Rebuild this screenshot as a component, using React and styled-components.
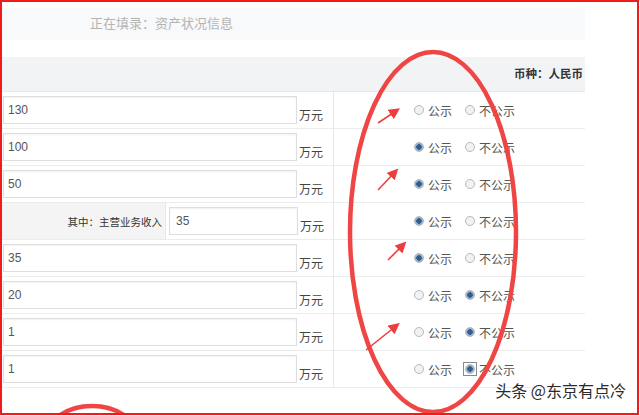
import styled, { createGlobalStyle } from "styled-components";

const GlobalStyle = createGlobalStyle`
  * { box-sizing: border-box; }
  body {
    margin: 0;
    background: #fff;
    font-family: "Liberation Sans", "Noto Sans CJK SC", sans-serif;
  }
`;

const rows = [
  { value: "130", pick: null },
  { value: "100", pick: "yes" },
  { value: "50", pick: "yes" },
  { value: "35", pick: "yes", label: "其中：主营业务收入" },
  { value: "35", pick: "yes" },
  { value: "20", pick: "no" },
  { value: "1", pick: "no" },
  { value: "1", pick: "no", focus: true },
];

function Radio({ checked, focus, text }) {
  return (
    <RadioItem>
      <FocusBox focus={focus}>
        <Dot checked={checked} />
      </FocusBox>
      <span>{text}</span>
    </RadioItem>
  );
}

function Marks() {
  return (
    <Overlay viewBox="0 0 640 415" width="640" height="415">
      <defs>
        <marker id="head" markerWidth="7" markerHeight="7" refX="4" refY="3.5" orient="auto">
          <path d="M0,0 L7,3.5 L0,7 Z" fill="#ee3d3d" />
        </marker>
      </defs>
      <ellipse cx="433" cy="232" rx="83" ry="180" fill="none" stroke="#f04545" strokeWidth="4.5" />
      <ellipse cx="92" cy="442" rx="48" ry="36" fill="none" stroke="#f04545" strokeWidth="4.5" />
      <g stroke="#ee3d3d" strokeWidth="1.6" markerEnd="url(#head)">
        <line x1="378" y1="123" x2="396" y2="111" />
        <line x1="378" y1="190" x2="395" y2="172" />
        <line x1="388" y1="260" x2="403" y2="245" />
        <line x1="366" y1="350" x2="396" y2="326" />
      </g>
    </Overlay>
  );
}

export default function App() {
  return (
    <>
      <GlobalStyle />
      <Frame>
        <Panel>
          <Header>正在填录：资产状况信息</Header>
          <CurrencyBar>币种：人民币</CurrencyBar>
          {rows.map((row, i) => (
            <Row key={i}>
              <AmountCell>
                {row.label && <LabelCell>{row.label}</LabelCell>}
                <Input short={!!row.label}>{row.value}</Input>
                <Unit>万元</Unit>
              </AmountCell>
              <ChoiceCell>
                <Radio checked={row.pick === "yes"} text="公示" />
                <Radio checked={row.pick === "no"} focus={row.focus} text="不公示" />
              </ChoiceCell>
            </Row>
          ))}
        </Panel>
        <Marks />
        <Watermark>头条 @东京有点冷</Watermark>
      </Frame>
    </>
  );
}

const Frame = styled.div`
  position: relative;
  width: 639px;
  height: 415px;
  border: 2px solid #ee1c1c;
  overflow: hidden;
  background: #fff;
`;

const Panel = styled.div`
  width: 583px;
  padding-top: 6px;
`;

const Header = styled.div`
  height: 32px;
  background: #f8f9fa;
  padding-left: 88px;
  font-size: 13px;
  line-height: 32px;
  color: #b4b4b4;
  margin-bottom: 17px;
`;

const CurrencyBar = styled.div`
  height: 35px;
  background: #f2f3f4;
  border-bottom: 1px solid #e8e8e8;
  text-align: right;
  padding-right: 2px;
  font-size: 11.5px;
  font-weight: bold;
  line-height: 35px;
  color: #333;
`;

const Row = styled.div`
  display: flex;
  height: 37px;
  border-bottom: 1px solid #ececec;
`;

const AmountCell = styled.div`
  display: flex;
  align-items: center;
  width: 332px;
  padding-left: 1px;
  border-right: 1px solid #e8e8e8;
`;

const LabelCell = styled.div`
  align-self: stretch;
  width: 164px;
  margin-left: -1px;
  background: #f4f4f4;
  border-right: 1px solid #e8e8e8;
  display: flex;
  align-items: center;
  justify-content: flex-end;
  padding-right: 3px;
  font-size: 10.5px;
  color: #333;
  margin-right: 3px;
`;

const Input = styled.div`
  width: ${(p) => (p.short ? "129px" : "294px")};
  height: 28px;
  border: 1px solid #dedede;
  box-shadow: inset 0 1px 2px rgba(0, 0, 0, 0.06);
  background: #fff;
  padding-left: ${(p) => (p.short ? "6px" : "4px")};
  font-size: 12px;
  line-height: 26px;
  color: #555;
`;

const Unit = styled.span`
  margin-top: 9px;
  margin-left: 2px;
  font-size: 12px;
  color: #444;
`;

const ChoiceCell = styled.div`
  display: flex;
  align-items: center;
  gap: 12px;
  padding-left: 79px;
  flex: 1;
`;

const RadioItem = styled.label`
  display: flex;
  align-items: center;
  gap: 3px;
  font-size: 12px;
  color: #555;
`;

const FocusBox = styled.span`
  display: flex;
  padding: 1px;
  margin: -1px;
  border: 1px solid ${(p) => (p.focus ? "#8a8a8a" : "transparent")};
`;

const Dot = styled.span`
  width: 10px;
  height: 10px;
  border-radius: 50%;
  border: 1px solid #b8b8b8;
  background: ${(p) =>
    p.checked ? "radial-gradient(circle, #2f5f8e 0 2.5px, #9ab6cf 3px)" : "#f2f2f2"};
`;

const Overlay = styled.svg`
  position: absolute;
  left: -2px;
  top: -2px;
  pointer-events: none;
`;

const Watermark = styled.div`
  position: absolute;
  right: 11px;
  bottom: 11px;
  font-family: "Noto Sans CJK SC", sans-serif;
  font-size: 16px;
  color: #2a2a2a;
  text-shadow: 0 0 2px #fff, 0 0 2px #fff;
`;
